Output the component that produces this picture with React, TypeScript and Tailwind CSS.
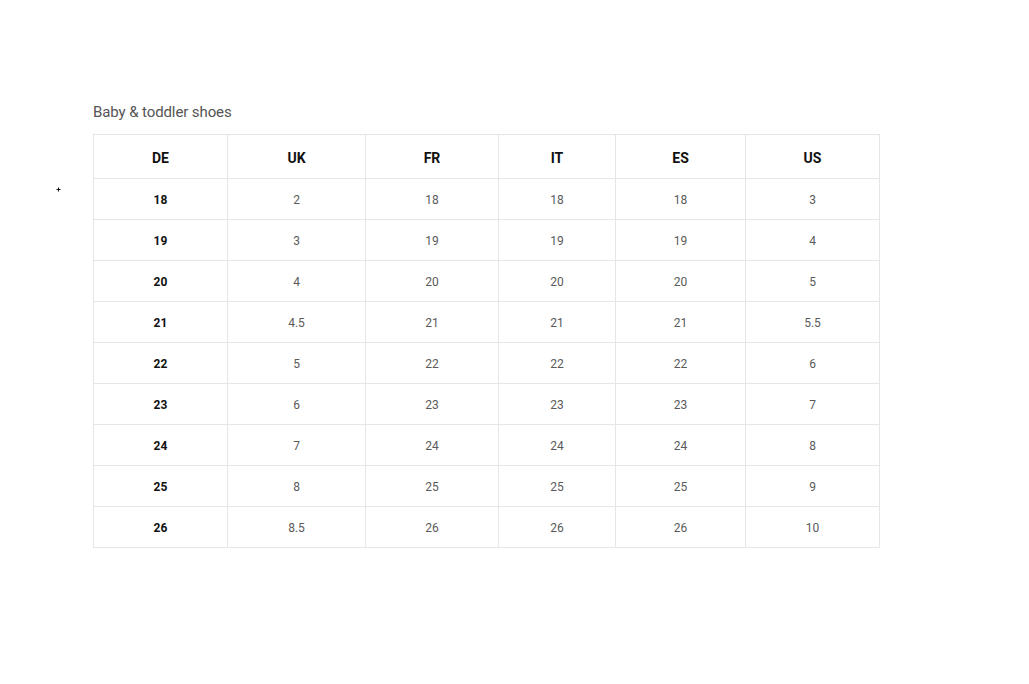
const headers = ["DE", "UK", "FR", "IT", "ES", "US"];
const widths = ["w-[134px]", "w-[138px]", "w-[133px]", "w-[117px]", "w-[130px]", "w-[134px]"];

const rows = [
  ["18", "2", "18", "18", "18", "3"],
  ["19", "3", "19", "19", "19", "4"],
  ["20", "4", "20", "20", "20", "5"],
  ["21", "4.5", "21", "21", "21", "5.5"],
  ["22", "5", "22", "22", "22", "6"],
  ["23", "6", "23", "23", "23", "7"],
  ["24", "7", "24", "24", "24", "8"],
  ["25", "8", "25", "25", "25", "9"],
  ["26", "8.5", "26", "26", "26", "10"],
];

export default function App() {
  return (
    <div className="relative min-h-[684px] w-[1029px] bg-white pl-[93px] pt-[101px] font-['Roboto',sans-serif]">
      {/* tiny cursor mark */}
      <svg className="absolute left-[56px] top-[187px]" width="5" height="5" viewBox="0 0 5 5">
        <path d="M2.5 0.5v4M0.5 2.5h4" stroke="#111" strokeWidth="1" />
      </svg>

      <h2 className="mb-[11px] text-[15px] leading-[22px] tracking-[-0.1px] text-[#555]">
        Baby &amp; toddler shoes
      </h2>

      <table className="table-fixed border-collapse border border-[#e6e6e6] text-center">
        <colgroup>
          {widths.map((w, i) => (
            <col key={i} className={w} />
          ))}
        </colgroup>
        <thead>
          <tr className="h-[44px]">
            {headers.map((h) => (
              <th
                key={h}
                className="border border-[#e6e6e6] p-0 pt-[3px] text-[14px] font-bold text-[#111]"
              >
                {h}
              </th>
            ))}
          </tr>
        </thead>
        <tbody>
          {rows.map((r) => (
            <tr key={r[0]} className="h-[41px]">
              {r.map((c, i) => (
                <td
                  key={i}
                  className={
                    i === 0
                      ? "border border-[#e6e6e6] p-0 pt-[2px] text-[12px] font-bold text-[#111]"
                      : "border border-[#e6e6e6] p-0 pt-[2px] text-[12px] text-[#5a5a5a]"
                  }
                >
                  {c}
                </td>
              ))}
            </tr>
          ))}
        </tbody>
      </table>
    </div>
  );
}
